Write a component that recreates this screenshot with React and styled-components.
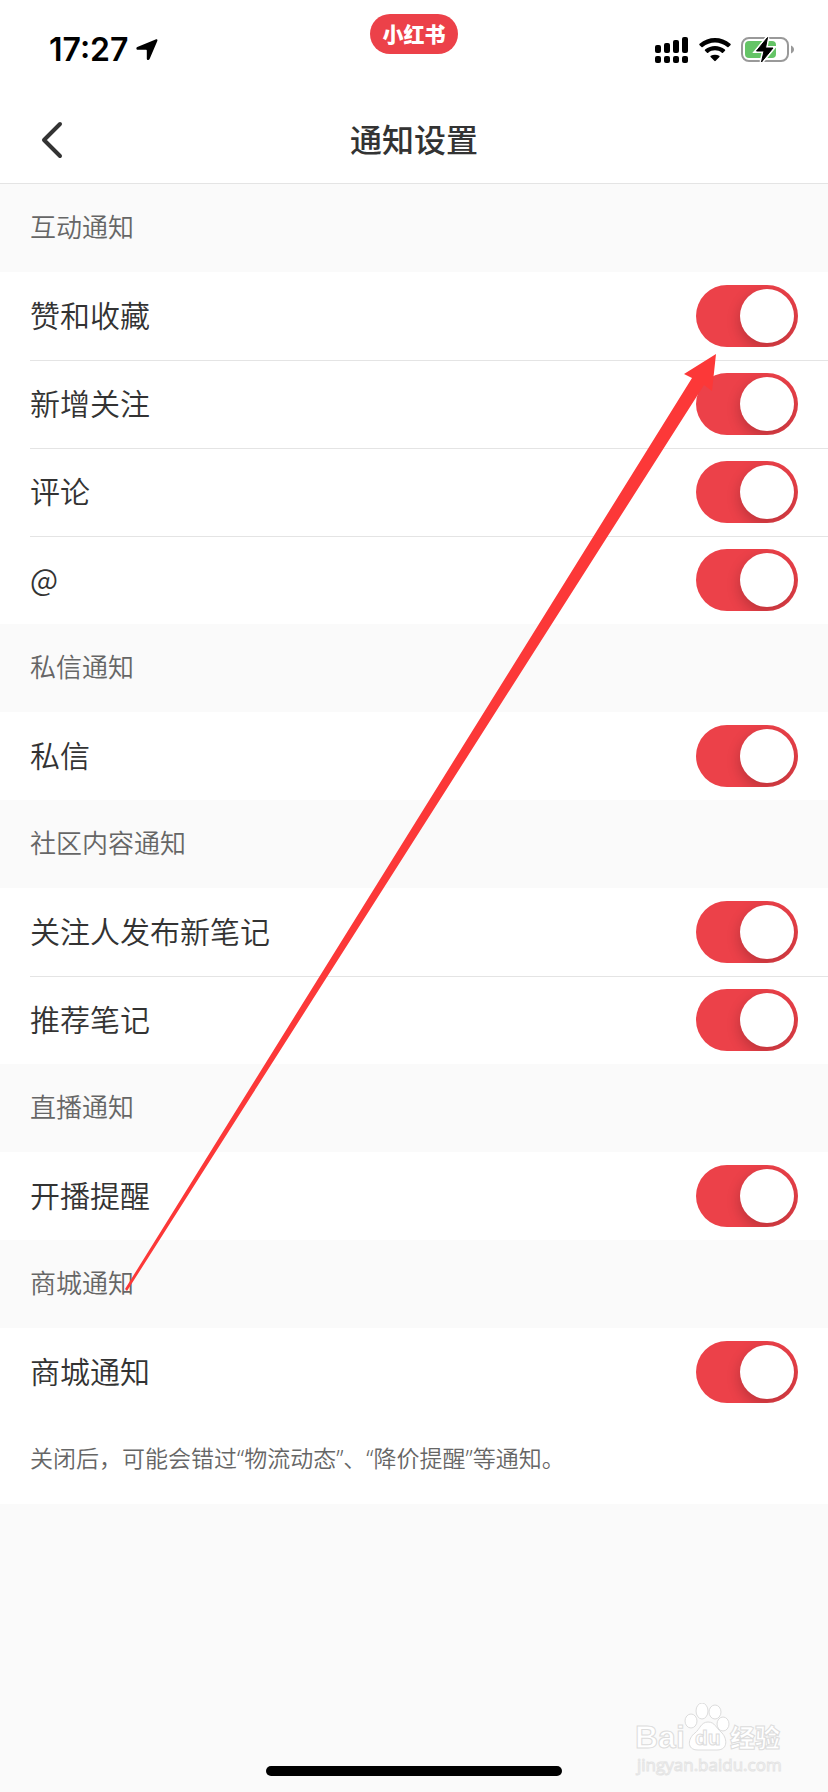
import React, { useState } from "react";
import styled, { createGlobalStyle } from "styled-components";

const GlobalStyle = createGlobalStyle`
  * {
    box-sizing: border-box;
  }
  body {
    margin: 0;
    background: #fafafa;
    color: #333;
    font-family: "Noto Sans CJK SC", sans-serif;
  }
`;

const Page = styled.div`
  position: relative;
  display: flex;
  flex-direction: column;
  min-height: 100vh;
`;

const StatusBar = styled.div`
  display: grid;
  grid-template-columns: 1fr auto 1fr;
  align-items: center;
  height: 96px;
  padding: 4px 34px 0;
  background: #fff;
  color: #000;
`;

const Clock = styled.div`
  display: flex;
  align-items: center;
  gap: 8px;
  padding-left: 15px;
  font-family: Inter, sans-serif;
  font-size: 32px;
  font-weight: 600;
  line-height: 40px;
`;

const AppPill = styled.div`
  align-self: start;
  width: 88px;
  height: 40px;
  margin-top: 10px;
  border-radius: 20px;
  background: #ec4149;
  color: #fff;
  font-size: 21px;
  font-weight: 900;
  line-height: 38px;
  text-align: center;
`;

const StatusIcons = styled.div`
  display: flex;
  align-items: center;
  justify-content: flex-end;
  gap: 10px;
`;

const NavBar = styled.header`
  display: grid;
  grid-template-columns: 1fr auto 1fr;
  align-items: center;
  height: 88px;
  padding: 0 30px;
  border-bottom: 1px solid #e4e4e4;
  background: #fff;
`;

const BackButton = styled.button`
  display: flex;
  justify-self: start;
  padding: 0 8px;
  border: 0;
  background: none;
  color: #333;
`;

const Title = styled.h1`
  margin: 0;
  padding-bottom: 4px;
  font-size: 32px;
  font-weight: 500;
  line-height: 48px;
`;

const SectionTitle = styled.h2`
  margin: 0;
  padding: 0 30px 4px;
  color: #666;
  font-size: 26px;
  font-weight: 350;
  line-height: 84px;
`;

const Rows = styled.div`
  background: #fff;
`;

const Row = styled.div`
  display: flex;
  align-items: center;
  justify-content: space-between;
  height: 88px;
  margin-left: 30px;
  padding-right: 30px;

  & + & {
    box-shadow: inset 0 1px #e4e4e4;
  }
`;

const Label = styled.label`
  flex: 1;
  padding-bottom: 4px;
  font-size: 30px;
  font-weight: 350;
  line-height: 84px;
`;

const Switch = styled.input`
  appearance: none;
  width: 102px;
  height: 62px;
  margin: 0;
  padding: 4px;
  border-radius: 31px;
  background: ${props => (props.checked ? "#ec4149" : "#e4e4e4")};
  overflow: hidden;

  &::before {
    content: "";
    display: block;
    width: 54px;
    height: 54px;
    margin-left: ${props => (props.checked ? "40px" : "0")};
    border-radius: 50%;
    background: #fff;
    box-shadow: 0 5px 14px rgba(0, 0, 0, 0.22);
  }
`;

const Note = styled.p`
  margin: 0;
  padding: 0 30px 4px;
  color: #666;
  font-family: "Noto Sans", "Noto Sans CJK SC", sans-serif;
  font-size: 23px;
  font-weight: 350;
  line-height: 84px;
`;

const Bottom = styled.footer`
  display: flex;
  justify-content: center;
  margin-top: auto;
  padding: 16px 0;
`;

const Watermark = styled.svg`
  position: absolute;
  right: 39px;
  bottom: 13px;
  pointer-events: none;
`;

const HomeIndicator = styled.div`
  width: 296px;
  height: 10px;
  border-radius: 5px;
  background: #000;
`;

const Arrow = styled.svg`
  position: absolute;
  top: 354px;
  left: 125px;
  pointer-events: none;
`;

const sections = [
  { title: "互动通知", items: ["赞和收藏", "新增关注", "评论", "@"] },
  { title: "私信通知", items: ["私信"] },
  { title: "社区内容通知", items: ["关注人发布新笔记", "推荐笔记"] },
  { title: "直播通知", items: ["开播提醒"] },
  {
    title: "商城通知",
    items: ["商城通知"],
    note: "关闭后，可能会错过“物流动态”、“降价提醒”等通知。"
  }
];

const LocationIcon = () => (
  <svg width="22" height="22" viewBox="0 0 22 22">
    <path
      d="M19.6.5C20.9 0 21.8.8 21.3 2L13.6 20C13 21.6 10.8 21.4 10.8 19.7V11.5Q10.8 10.8 10.1 10.8H2C.2 10.8-.2 8.8 1.3 8.1Z"
      fill="#000"
    />
  </svg>
);

const SignalIcon = () => (
  <svg width="34" height="26" viewBox="0 0 34 26">
    <rect x="0" y="8" width="6" height="8" rx="2" />
    <rect x="9" y="6" width="6" height="10" rx="2" />
    <rect x="18" y="3" width="6" height="13" rx="2" />
    <rect x="27" y="0" width="6" height="16" rx="2" />
    {[0, 9, 18, 27].map(x => (
      <rect key={x} x={x} y="19" width="6" height="7" rx="2" />
    ))}
  </svg>
);

const WifiIcon = () => (
  <svg width="32" height="24" viewBox="0 0 32 24">
    <path d="M.6 7.2Q-.1 6.5.6 5.8C9.3-1.8 22.7-1.8 31.4 5.8Q32.1 6.5 31.4 7.2L29.5 9.1Q29 9.6 28.3 9C21 3 11 3 3.7 9Q3 9.6 2.5 9.1Z" />
    <path d="M6 12.7Q5.4 12 6.1 11.4C11.8 6.7 20.2 6.7 25.9 11.4Q26.6 12 26 12.7L24 14.7Q23.4 15.2 22.8 14.7C18.8 11.5 13.2 11.5 9.2 14.7Q8.6 15.2 8 14.7Z" />
    <path d="M11.6 18.9Q11 18.2 11.8 17.8C14.2 16.4 17.8 16.4 20.2 17.8Q21 18.2 20.4 18.9L16.7 22.8Q16 23.5 15.3 22.8Z" />
  </svg>
);

const BatteryIcon = () => (
  <svg width="53" height="28" viewBox="0 0 53 28">
    <rect
      x="1"
      y="2"
      width="46"
      height="23"
      rx="7"
      fill="none"
      stroke="#999"
      strokeWidth="2"
    />
    <path d="M50 9.5C54 11 54 16 50 17.5Z" fill="#999" />
    <rect x="4" y="5" width="31" height="17" rx="4" fill="#65c466" />
    <path
      d="M26.5 1.5 15.5 15H23L20.5 26 32 12H24.5Z"
      stroke="#fff"
      strokeWidth="4"
    />
    <path
      d="M26.5 1.5 15.5 15H23L20.5 26 32 12H24.5Z"
      stroke="#000"
      strokeWidth="1"
      strokeLinejoin="round"
    />
  </svg>
);

const BaiduMark = () => (
  <Watermark
    width="154"
    height="76"
    viewBox="0 0 154 76"
    fill="#fff"
    stroke="#dcdcdc"
    strokeWidth="1"
  >
    <g fontFamily="Liberation Sans, sans-serif" fontWeight="700">
      <text x="0" y="45" fontSize="32">
        Bai
      </text>
      <ellipse cx="56" cy="18" rx="6" ry="7" />
      <ellipse cx="67" cy="8" rx="6" ry="8" />
      <ellipse cx="80" cy="9" rx="6" ry="7" />
      <ellipse cx="88" cy="21" rx="6" ry="7" />
      <path d="M73 19C80 19 81 25 86 29C92 34 94 47 82 47H63C51 47 53 35 60 30C65 26 66 19 73 19Z" />
      <text x="60" y="42" fontSize="21">
        du
      </text>
    </g>
    <text
      x="95"
      y="44"
      fontSize="25"
      fontFamily="Noto Sans CJK SC, sans-serif"
      fontWeight="900"
    >
      经验
    </text>
    <text
      x="2"
      y="68"
      fontSize="17"
      fontFamily="Open Sans, sans-serif"
      stroke="#e4e4e4"
    >
      jingyan.baidu.com
    </text>
  </Watermark>
);

const Toggle = ({ id, label }) => {
  const [on, setOn] = useState(true);
  return (
    <Row>
      <Label htmlFor={id}>{label}</Label>
      <Switch
        id={id}
        type="checkbox"
        role="switch"
        checked={on}
        onChange={() => setOn(!on)}
      />
    </Row>
  );
};

const App = () => (
  <Page>
    <GlobalStyle />
    <StatusBar>
      <Clock>
        17:27
        <LocationIcon />
      </Clock>
      <AppPill>小红书</AppPill>
      <StatusIcons>
        <SignalIcon />
        <WifiIcon />
        <BatteryIcon />
      </StatusIcons>
    </StatusBar>
    <NavBar>
      <BackButton type="button" aria-label="返回">
        <svg width="26" height="38" viewBox="0 0 26 38" fill="none">
          <path
            d="M22 3 6 19 22 35"
            stroke="currentColor"
            strokeWidth="4"
            strokeLinecap="round"
            strokeLinejoin="round"
          />
        </svg>
      </BackButton>
      <Title>通知设置</Title>
    </NavBar>
    <main>
      {sections.map((section, s) => (
        <section key={section.title}>
          <SectionTitle>{section.title}</SectionTitle>
          <Rows>
            {section.items.map((item, i) => (
              <Toggle key={item} id={`switch-${s}-${i}`} label={item} />
            ))}
            {section.note && <Note>{section.note}</Note>}
          </Rows>
        </section>
      ))}
    </main>
    <Bottom>
      <HomeIndicator />
    </Bottom>
    <BaiduMark />
    <Arrow width="592" height="938" viewBox="0 0 592 938">
      <path
        d="M591 0 559 20 567 24 0 935 2 937 579 31 587 37Z"
        fill="#fc3838"
      />
    </Arrow>
  </Page>
);

export default App;
